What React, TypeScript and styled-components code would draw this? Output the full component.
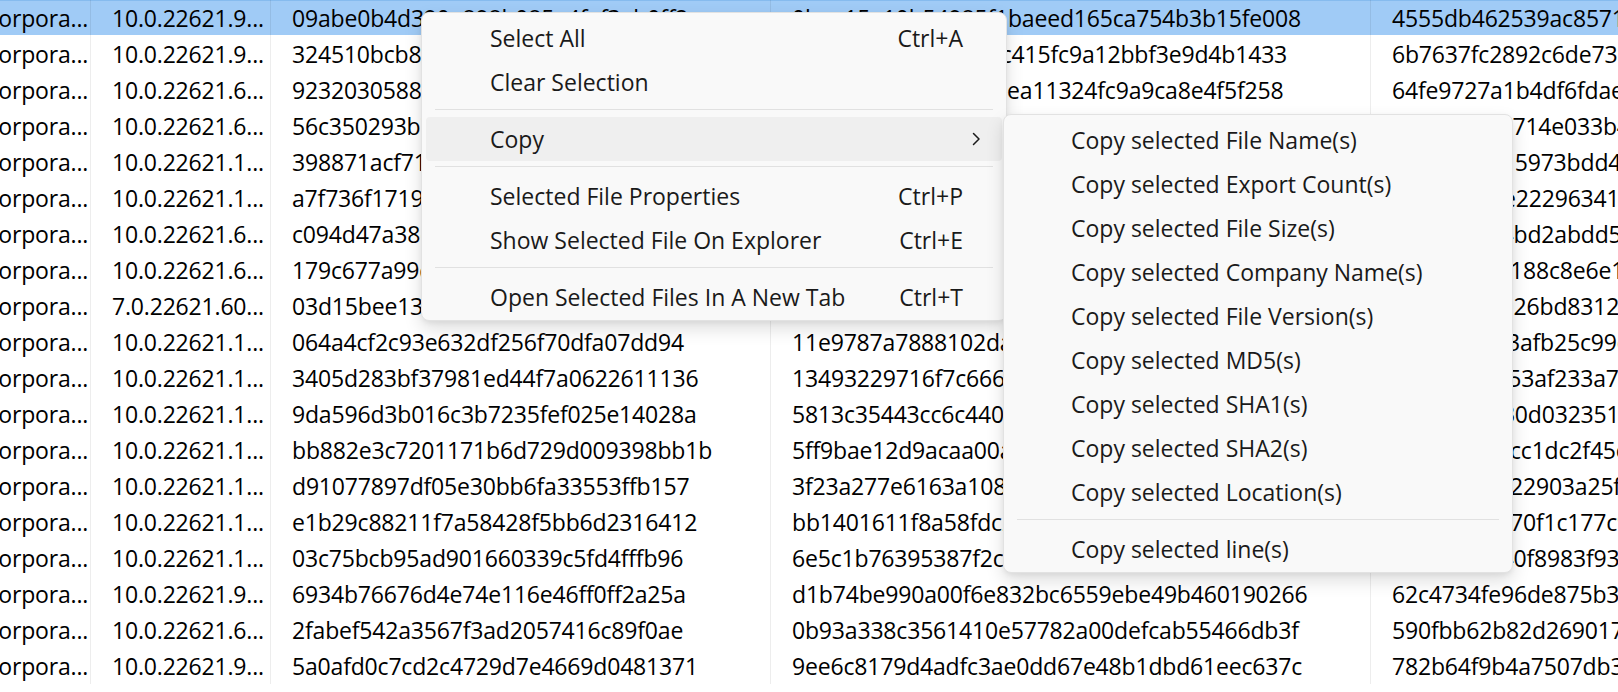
import React from "react";
import styled, { createGlobalStyle } from "styled-components";

const GlobalStyle = createGlobalStyle`
  html, body { margin: 0; padding: 0; background: #ffffff; overflow: hidden; }
  body { font-family: "Open Sans", "Noto Sans", sans-serif; color: #000; }
`;

type RowData = { c: string; v: string; md5: string; sha1: string; sha2: string };

const rows: RowData[] = [
  { c: "Corpora...", v: "10.0.22621.9...", md5: "09abe0b4d390e898b085a4faf3eb0ff2", sha1: "0bae15a10b54985f1baeed165ca754b3b15fe008", sha2: "4555db462539ac8571c3e0a9" },
  { c: "Corpora...", v: "10.0.22621.9...", md5: "324510bcb8e2a7d94f61c0b3a5de8172", sha1: "7d0c2e95bf4a13f61c415fc9a12bbf3e9d4b1433", sha2: "6b7637fc2892c6de73a14b" },
  { c: "Corpora...", v: "10.0.22621.6...", md5: "9232030588b1f4e7c9d2a06e35f8c174", sha1: "4c8a90b3e61d5f72dea11324fc9a9ca8e4f5f258", sha2: "64fe9727a1b4df6fdae3c1" },
  { c: "Corpora...", v: "10.0.22621.6...", md5: "56c350293b7e1a4d8f02c96b5e3a71d0", sha1: "a83f02d6b19c47e5f2a0d8c31b6e94f07a5c2d18", sha2: "b5b0d82d9714e033b4f2a" },
  { c: "Corpora...", v: "10.0.22621.1...", md5: "398871acf71b2d4e9a03f6c5e8d1b742", sha1: "c25e8f14a07d39b6e2f1a8c05d4b7e93f61a20c4", sha2: "8a1f4c0b315973bdd4a21c" },
  { c: "Corpora...", v: "10.0.22621.1...", md5: "a7f736f17194c2e8b5d01a3f69e7c2b4", sha1: "f14b2a9c06e83d5f7b1e4a20c9d68f3b5e2a7c01", sha2: "b3d7c91f0e22296341a7e1" },
  { c: "Corpora...", v: "10.0.22621.6...", md5: "c094d47a38e5b12f6d90a7c3b48e1f25", sha1: "3e9a1c5f72b04d8e6a3f19c2b7d05e4a8f1c6b29", sha2: "f0c2a7e194bd2abdd5e3c40" },
  { c: "Corpora...", v: "10.0.22621.6...", md5: "179c677a99d3e0b4a8f25c1e6b7d9403", sha1: "d6b28f0a3c91e57b4d2a6f8e0c13b95a7e4d2f61", sha2: "2e9a4b7d0188c8e6e1f93" },
  { c: "Corpora...", v: "7.0.22621.60...", md5: "03d15bee13a7c9f2e4b86d0153fa2c78", sha1: "9b1e4d7a2f06c83e5b9a1d4f7c20e68b3a5f9d02", sha2: "a71c5e3f9026bd8312c4e0" },
  { c: "Corpora...", v: "10.0.22621.1...", md5: "064a4cf2c93e632df256f70dfa07dd94", sha1: "11e9787a7888102da4c9e1f36b08d2a57e3c1b94", sha2: "5d02c8e4a3afb25c99e1b7" },
  { c: "Corpora...", v: "10.0.22621.1...", md5: "3405d283bf37981ed44f7a0622611136", sha1: "13493229716f7c666b2a0d9e4f18c37a5e2b6d10", sha2: "0c4e9b1d753af233a7f20" },
  { c: "Corpora...", v: "10.0.22621.1...", md5: "9da596d3b016c3b7235fef025e14028a", sha1: "5813c35443cc6c440e9a2b7d1f5c83e06a4d9b27", sha2: "f82b6c1e930d032351a8c4" },
  { c: "Corpora...", v: "10.0.22621.1...", md5: "bb882e3c7201171b6d729d009398bb1b", sha1: "5ff9bae12d9acaa00a3e7c5b2d8f14e960b7a3c1", sha2: "3b7e0a95dcc1dc2f45e81" },
  { c: "Corpora...", v: "10.0.22621.1...", md5: "d91077897df05e30bb6fa33553ffb157", sha1: "3f23a277e6163a1084c2e9b5d7a0f13e68b2c4d9", sha2: "97a4e1d0b22903a25f8d3" },
  { c: "Corpora...", v: "10.0.22621.1...", md5: "e1b29c88211f7a58428f5bb6d2316412", sha1: "bb1401611f8a58fdc2e7b93a0d4f6c15e8a2b7d0", sha2: "d4d8a21e570f1c177c9e2" },
  { c: "Corpora...", v: "10.0.22621.1...", md5: "03c75bcb95ad901660339c5fd4fffb96", sha1: "6e5c1b76395387f2c1a8e4d0b9f72c36e5a1d84b", sha2: "1f6e93c2a40f8983f932b7" },
  { c: "Corpora...", v: "10.0.22621.9...", md5: "6934b76676d4e74e116e46ff0ff2a25a", sha1: "d1b74be990a00f6e832bc6559ebe49b460190266", sha2: "62c4734fe96de875b3a10c" },
  { c: "Corpora...", v: "10.0.22621.6...", md5: "2fabef542a3567f3ad2057416c89f0ae", sha1: "0b93a338c3561410e57782a00defcab55466db3f", sha2: "590fbb62b82d2690174e8a" },
  { c: "Corpora...", v: "10.0.22621.9...", md5: "5a0afd0c7cd2c4729d7e4669d0481371", sha1: "9ee6c8179d4adfc3ae0dd67e48b1dbd61eec637c", sha2: "782b64f9b4a7507db3e5c2" },
];

const Page = styled.div`
  position: relative;
  width: 1618px;
  height: 692px;
  overflow: hidden;
  background: #ffffff;
`;

const Table = styled.div`
  display: flex;
  flex-direction: column;
  margin-left: -37px;
`;

const Row = styled.div<{ $selected?: boolean }>`
  display: grid;
  grid-template-columns: 128px 180px 500px 600px 1fr;
  height: 36px;
  background: ${(p) => (p.$selected ? "#a0cbf6" : "#ffffff")};
  box-shadow: ${(p) => (p.$selected ? "inset 0 1px 0 #86bbee, inset 0 -1px 0 #ffffff" : "none")};
`;

const Cell = styled.div<{ $last?: boolean }>`
  box-sizing: border-box;
  padding-left: 21px;
  font-size: 23px;
  letter-spacing: -0.18px;
  line-height: 36px;
  white-space: nowrap;
  overflow: hidden;
  color: #000;
  border-right: ${(p) => (p.$last ? "none" : "1px solid rgba(0,0,0,0.07)")};
`;

const Menu = styled.div<{ $left: number; $top: number; $width: number }>`
  position: absolute;
  left: ${(p) => p.$left}px;
  top: ${(p) => p.$top}px;
  width: ${(p) => p.$width}px;
  box-sizing: border-box;
  padding: 3px 4px 1px;
  background: #f9f9f9;
  border: 1px solid #e2e2e2;
  border-radius: 8px;
  box-shadow: 0 8px 18px rgba(0, 0, 0, 0.13), 0 2px 5px rgba(0, 0, 0, 0.06);
  font-size: 23px;
  color: #1a1a1a;
`;

const Item = styled.div<{ $active?: boolean; $indent: number; $right: number }>`
  display: grid;
  grid-template-columns: 1fr auto;
  align-items: center;
  height: 44px;
  padding-left: ${(p) => p.$indent}px;
  padding-right: ${(p) => p.$right}px;
  border-radius: 4px;
  background: ${(p) => (p.$active ? "#efefef" : "transparent")};
  white-space: nowrap;
`;

const Shortcut = styled.span`
  color: #1a1a1a;
`;

const Separator = styled.div<{ $inset: number }>`
  height: 1px;
  margin: 5px ${(p) => p.$inset}px 7px;
  background: #e1e1e1;
`;

const Chevron = () => (
  <svg width="9" height="14" viewBox="0 0 9 14" fill="none">
    <path d="M1.5 1.5 L7 7 L1.5 12.5" stroke="#1a1a1a" strokeWidth="1.5" strokeLinecap="round" strokeLinejoin="round" />
  </svg>
);

const subItems = [
  "Copy selected File Name(s)",
  "Copy selected Export Count(s)",
  "Copy selected File Size(s)",
  "Copy selected Company Name(s)",
  "Copy selected File Version(s)",
  "Copy selected MD5(s)",
  "Copy selected SHA1(s)",
  "Copy selected SHA2(s)",
  "Copy selected Location(s)",
];

export default function App() {
  return (
    <Page>
      <GlobalStyle />
      <Table>
        {rows.map((r, i) => (
          <Row key={i} $selected={i === 0}>
            <Cell>{r.c}</Cell>
            <Cell>{r.v}</Cell>
            <Cell>{r.md5}</Cell>
            <Cell>{r.sha1}</Cell>
            <Cell $last>{r.sha2}</Cell>
          </Row>
        ))}
      </Table>

      <Menu $left={421} $top={12} $width={586}>
        <Item $indent={64} $right={39}>
          <span>Select All</span>
          <Shortcut>Ctrl+A</Shortcut>
        </Item>
        <Item $indent={64} $right={39}>
          <span>Clear Selection</span>
          <span />
        </Item>
        <Separator $inset={9} />
        <Item $indent={64} $right={21} $active>
          <span>Copy</span>
          <Chevron />
        </Item>
        <Separator $inset={9} />
        <Item $indent={64} $right={39}>
          <span>Selected File Properties</span>
          <Shortcut>Ctrl+P</Shortcut>
        </Item>
        <Item $indent={64} $right={39}>
          <span>Show Selected File On Explorer</span>
          <Shortcut>Ctrl+E</Shortcut>
        </Item>
        <Separator $inset={9} />
        <Item $indent={64} $right={39}>
          <span>Open Selected Files In A New Tab</span>
          <Shortcut>Ctrl+T</Shortcut>
        </Item>
      </Menu>

      <Menu $left={1003} $top={114} $width={510}>
        {subItems.map((t) => (
          <Item key={t} $indent={63} $right={20}>
            <span>{t}</span>
            <span />
          </Item>
        ))}
        <Separator $inset={9} />
        <Item $indent={63} $right={20}>
          <span>Copy selected line(s)</span>
          <span />
        </Item>
      </Menu>
    </Page>
  );
}
